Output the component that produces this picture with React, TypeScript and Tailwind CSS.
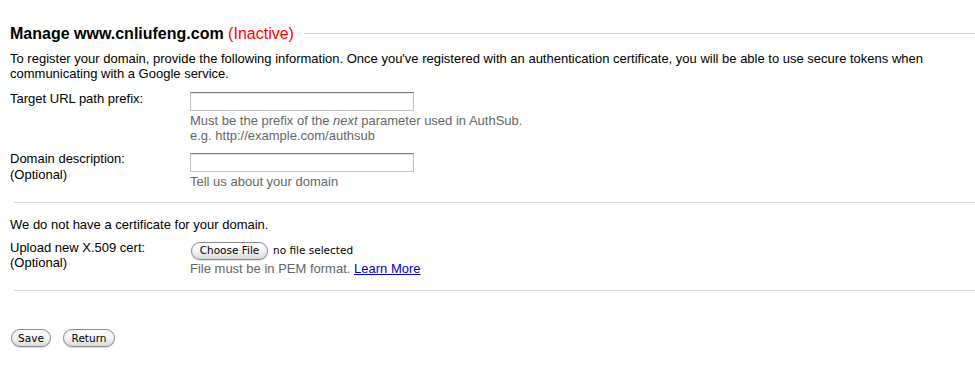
import React from "react";

const btn =
  "inline-flex items-center justify-center h-[18px] rounded-full border border-[#8a8a8a] bg-linear-to-b from-white via-[#f4f4f4] to-[#d9d9d9] text-[10.5px] text-black font-['DejaVu_Sans',sans-serif] leading-none shadow-[0_1px_1px_rgba(0,0,0,0.15)]";

function TextBox() {
  return (
    <div className="w-[224px] h-[19px] border border-[#c4c4c4] border-t-[#7b7b7b] bg-white shadow-[inset_0_1px_1px_rgba(0,0,0,0.12)]" />
  );
}

export default function App() {
  return (
    <div className="w-[975px] h-[384px] bg-white text-black text-[13px] font-['Liberation_Sans',Arial,sans-serif] pl-[10px] pt-[24px] overflow-hidden">
      <div className="flex items-center">
        <h2 className="text-[16px] leading-[19px] whitespace-nowrap">
          <span className="font-bold">Manage www.cnliufeng.com</span>{" "}
          <span className="text-[#ff0000]">(Inactive)</span>
        </h2>
        <div className="flex-1 h-px bg-[#cfcfcf] ml-[10px]" />
      </div>

      <p className="mt-[8px] leading-[15px] pr-[10px]">
        To register your domain, provide the following information. Once you've registered with an
        authentication certificate, you will be able to use secure tokens when communicating with a
        Google service.
      </p>

      <div className="grid grid-cols-[180px_1fr] mt-[8px]">
        <div className="leading-[15px] pt-[2px]">Target URL path prefix:</div>
        <div>
          <div className="mt-[3px]">
            <TextBox />
          </div>
          <div className="mt-[2px] leading-[15px] text-[#666]">
            Must be the prefix of the <i>next</i> parameter used in AuthSub.
            <br />
            e.g. http://example.com/authsub
          </div>
        </div>
      </div>

      <div className="grid grid-cols-[180px_1fr] mt-[7px]">
        <div className="leading-[16px] pt-[1px]">
          Domain description:
          <br />
          (Optional)
        </div>
        <div>
          <div className="mt-[3px]">
            <TextBox />
          </div>
          <div className="mt-[2px] leading-[15px] text-[#666]">Tell us about your domain</div>
        </div>
      </div>

      <div className="mt-[13px] ml-[4px] h-px bg-[#d9d9d9]" />

      <div className="mt-[14px] leading-[15px]">We do not have a certificate for your domain.</div>

      <div className="grid grid-cols-[180px_1fr] mt-[8px]">
        <div className="leading-[15px]">
          Upload new X.509 cert:
          <br />
          (Optional)
        </div>
        <div>
          <div className="mt-[2px] flex items-center h-[17px]">
            <span className={btn + " w-[77px] h-[17px] ml-[1px]"}>Choose File</span>
            <span className="ml-[5px] text-[10.5px] font-['DejaVu_Sans',sans-serif]">
              no file selected
            </span>
          </div>
          <div className="mt-[2px] leading-[15px] text-[#666]">
            File must be in PEM format.{" "}
            <a href="#" className="text-[#0000cc] underline">
              Learn More
            </a>
          </div>
        </div>
      </div>

      <div className="mt-[14px] ml-[4px] h-px bg-[#d9d9d9]" />

      <div className="mt-[38px] ml-[1px] flex gap-[12px]">
        <span className={btn + " w-[40px]"}>Save</span>
        <span className={btn + " w-[52px]"}>Return</span>
      </div>
    </div>
  );
}
